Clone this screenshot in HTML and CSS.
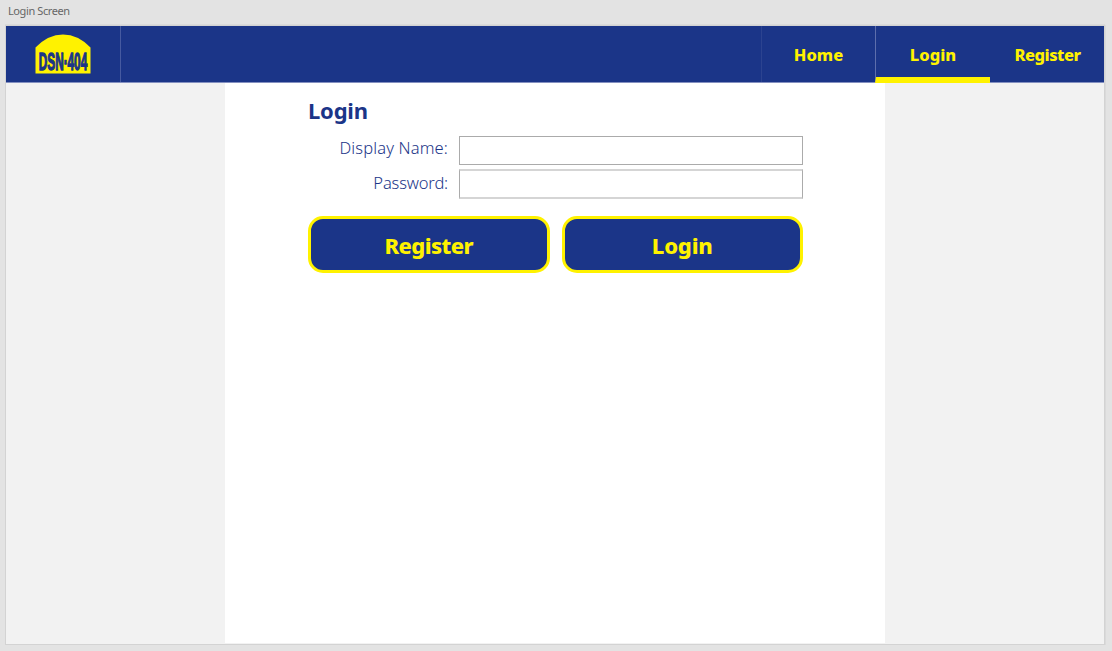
FILE: index.html
```html
<!DOCTYPE html>
<html lang="en">
<head>
<meta charset="utf-8">
<title>Login Screen</title>
<link rel="stylesheet" href="styles.css">
</head>
<body>
<div class="artboard-title">Login Screen</div>
<div class="artboard">
  <header class="navbar">
    <a class="brand">
      <svg class="logo" width="56" height="40" viewBox="0 0 56 40">
        <path class="logo-shape" d="M0.5 39.5V13.5Q13 .5 28 .5T55.5 13.5V39.5Z"/>
        <text class="logo-text" transform="translate(3.8 35.7) scale(.8 1.65)" textLength="60.5" lengthAdjust="spacingAndGlyphs">DSN·404</text>
      </svg>
    </a>
    <nav class="links">
      <a class="link home"><span>Home</span></a>
      <a class="link active"><span>Login</span></a>
      <a class="link register"><span>Register</span></a>
    </nav>
  </header>
  <main class="page">
    <h1 class="heading">Login</h1>
    <form class="form">
      <label class="label name" for="name"><span>Display Name:</span></label>
      <input class="field" id="name" type="text">
      <label class="label password" for="password"><span>Password:</span></label>
      <input class="field soft" id="password" type="password">
    </form>
    <div class="actions">
      <button class="button register" type="button">Register</button>
      <button class="button" type="button">Login</button>
    </div>
  </main>
</div>
</body>
</html>
```
FILE: styles.css
```css
* { box-sizing: border-box; }
body {
  margin: 0;
  height: 651px;
  overflow: hidden;
  background: #e3e3e3;
  font-family: "Noto Sans", "Open Sans", sans-serif;
  color: #1b3588;
}
.artboard-title {
  height: 25px;
  padding: 3px 0 0 8px;
  font-size: 11px;
  line-height: 16px;
  letter-spacing: -0.4px;
  color: #666;
}
.artboard {
  width: 1100px;
  height: 620px;
  margin-left: 5px;
  border: 1px solid #d3d3d3;
  background: #f2f2f2;
  box-shadow: 1px 0 0 #dadada, 0 -1px 0 #dadada;
}
.navbar {
  display: flex;
  justify-content: space-between;
  height: 57px;
  background: #1b3588;
  border-bottom: 1px solid #8490c0;
}
.brand {
  width: 115px;
  padding: 8px 0 0 29px;
  border-right: 1px solid #465aa0;
}
.logo { display: block; overflow: visible; }
.logo-shape { fill: #fff200; }
.logo-text {
  font: bold 14.5px "Liberation Sans", sans-serif;
  fill: #1b3588;
  stroke: #1b3588;
  stroke-width: .8px;
}
.links { display: flex; }
.link {
  width: 114px;
  height: 56px;
  padding-top: 17px;
  text-align: center;
  font-size: 16.5px;
  line-height: 24px;
  font-weight: 800;
  letter-spacing: 0;
  color: #fff200;
}
.link.home { border-left: 1px solid #2c4390; }
.link.active {
  width: 115px;
  height: 57px;
  border-left: 1px solid #5d6eac;
  border-bottom: 6px solid #fff200;
}
.link.register { letter-spacing: -0.5px; padding-left: 1px; }
.page {
  width: 660px;
  height: 560px;
  margin-left: 219px;
  padding: 11px 82px 0 83px;
  background: #fff;
}
.heading {
  margin: 0;
  font-size: 22px;
  line-height: 32px;
  letter-spacing: -0.2px;
}
.form {
  display: grid;
  grid-template-columns: 140px 344px;
  column-gap: 11px;
  row-gap: 4px;
  margin-top: 10px;
}
.label {
  text-align: right;
  font-size: 16.5px;
  line-height: 28px;
  font-weight: 300;
}
.label.name { line-height: 24px; letter-spacing: 0.15px; }
.label.password { letter-spacing: -0.15px; }
.field {
  width: 344px;
  height: 29px;
  padding: 0 8px;
  border: 1px solid #ababab;
  background: #fff;
  font: inherit;
}
.field.soft {
  height: 30px;
  border-width: 2px 1px;
  border-top-color: #d5d5d5;
  border-bottom-color: #d5d5d5;
}
.actions {
  display: flex;
  gap: 12px;
  margin-top: 16.5px;
}
.button {
  width: 241.5px;
  height: 57px;
  padding: 2px 0 0;
  border: 3px solid #fff200;
  border-radius: 15px;
  background: #1b3588;
  font: 800 22px/32px "Noto Sans", "Open Sans", sans-serif;
  letter-spacing: -0.2px;
  color: #fff200;
}
.button.register { letter-spacing: -0.6px; }
```
